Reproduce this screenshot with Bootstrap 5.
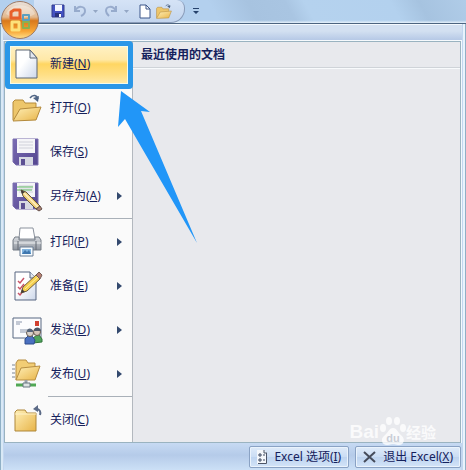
<!DOCTYPE html>
<html lang="zh-CN">
<head>
<meta charset="utf-8">
<meta name="viewport" content="width=device-width, initial-scale=1">
<title>Excel</title>
<link href="https://cdn.jsdelivr.net/npm/bootstrap@5.3.0/dist/css/bootstrap.min.css" rel="stylesheet">
<style>
body{font-family:"Noto Sans","Noto Sans CJK SC",sans-serif;font-size:12px;line-height:18px;color:#15215c;background:#b9d1ee}
button{font:inherit;color:inherit;border:0;background:none;padding:0}
svg{display:block;flex:none}
.quickbar{height:24px;padding-left:34px;border-bottom:1px solid #4c6480;background:linear-gradient(#fff0 88%,#e6f1fb),linear-gradient(62deg,#b3d0ee 0 46%,#a7c3e0 54%,#a9c5e2 62%,#b5d2ee 66%,#b3d1ee 84%,#a6c3e0 90%,#b0cce8)}
.tools{height:23px;width:151px;padding-left:17px;border:1px solid #8a9bb8;border-left:0;border-top:0;border-radius:0 0 14px 0;border-top-right-radius:8px;background:linear-gradient(#d5e3f6,#c3d5ee)}
.dim{opacity:.45}
.orb{position:absolute;left:1px;top:0;z-index:3}
.shell{border:1px solid #8fb0c6;border-top:0;border-bottom:0;padding:0 4px 0 3px;background:#c3d6ef;min-height:calc(100vh - 24px);box-shadow:inset 2px 0 #d9e9f6,inset -2px 0 #e8f3fc}
.band{height:17px;margin:0 -1px;border-top:1px solid #f4f9fe;border-bottom:1px solid #f6fafd;background:linear-gradient(#d3e0f1 40%,#b6c9e6)}
.pane{border:1px solid #9ab3c0;background:#e8e9ed;box-shadow:0 1px #f4f9fd,1px 0 #f4f9fd}
.menu{width:128px;background:#fafafa;border-right:1px solid #b3b8be}
.entry{height:44px;width:100%;padding:0 10px 0 7px;text-align:left;font-size:12px}
.entry .txt{margin-left:6px}
.picked{position:relative;background:linear-gradient(#fff3cc,#ffe9a8 40%,#ffd662 50%,#ffdf86 75%,#ffeeb4)}
.frame{position:absolute;left:0;top:-1px;right:-1px;bottom:-3px;border:5px solid #2a97e8;border-radius:4px;box-shadow:inset 0 0 0 1px #f5fbe8}
.rule{height:2px;margin-left:43px;border-top:1px solid #a9b0b8}
.heading{font-size:12px;line-height:18px;font-weight:700;padding:4px 8px 3px;border-bottom:1px solid #cfd3d8;box-shadow:0 1px #f8fafc}
.foot{padding:3px 0 2px;gap:6px;background:linear-gradient(#c7daf3,#b5cbe9 45%,#cce0f6)}
.cmd{height:22px;padding:0 7px;gap:7px;border:1px solid #8aa2c4;border-radius:2px;background:linear-gradient(#dfebf9,#cbddf4 48%,#bdd3ef 50%,#d3e4f8);box-shadow:inset 0 0 0 1px #eaf3fc;font-size:12px;line-height:18px;white-space:nowrap}
.pointer{position:absolute;left:118px;top:90px;z-index:4;pointer-events:none}
.stamp{position:absolute;right:30px;bottom:20px;z-index:4;color:#fff;opacity:.8;pointer-events:none;height:36px}
.stamp b{font:700 19px/20px "Liberation Sans",sans-serif}
.stamp .zh{font:700 15px/20px "Noto Sans CJK SC",sans-serif}
</style>
<script src="https://cdn.jsdelivr.net/npm/bootstrap@5.3.0/dist/js/bootstrap.bundle.min.js"></script>
</head>
<body class="position-relative overflow-hidden">
<svg width="0" height="0" class="position-absolute" aria-hidden="true">
<defs>
<linearGradient id="gold" x1="0" y1="0" x2="1" y2="1"><stop offset="0" stop-color="#fff0b8"/><stop offset="1" stop-color="#e8b448"/></linearGradient>
<linearGradient id="paper" x1="0" y1="0" x2="1" y2="1"><stop offset=".4" stop-color="#fff"/><stop offset="1" stop-color="#ccd7ea"/></linearGradient>
<linearGradient id="violet" x1="0" y1="0" x2="1" y2="1"><stop offset="0" stop-color="#7a6cb4"/><stop offset="1" stop-color="#54468f"/></linearGradient>
<linearGradient id="steel" x1="0" y1="0" x2="0" y2="1"><stop offset="0" stop-color="#d8dbe0"/><stop offset="1" stop-color="#8f959e"/></linearGradient>
<linearGradient id="ball" x1="0" y1="0" x2="0" y2="1"><stop offset="0" stop-color="#e9e2dc"/><stop offset=".42" stop-color="#e3b98e"/><stop offset=".52" stop-color="#d9781c"/><stop offset=".8" stop-color="#f7a535"/><stop offset="1" stop-color="#ffe08a"/></linearGradient>
<symbol id="page" viewBox="0 0 32 32"><path d="M4 2h14l7 8v20H4z" fill="url(#paper)" stroke="#5d6675"/><path d="M18 2v8h7z" fill="#e3e8f0" stroke="#5d6675" stroke-linejoin="round"/></symbol>
<symbol id="open" viewBox="0 0 32 32"><path d="M1 28V10l2-2h8l2 3h11v6" fill="#edc66b" stroke="#b48a3c"/><path d="M1 29l7-12 21-2-5 13z" fill="url(#gold)" stroke="#b48a3c" stroke-linejoin="round"/><path d="M18 6c3-4 7-3 8 1" fill="none" stroke="#4f6484" stroke-width="1.500"/><path d="M21 6l6-2-1 6z" fill="#4f6484"/></symbol>
<symbol id="disk" viewBox="0 0 32 32"><path d="M1 3h25v26H4l-3-3z" fill="url(#violet)" stroke="#7b6fae"/><path d="M5 3h18v14H5z" fill="#f5f5f8"/><path d="M7 6h14M7 9h14M7 12h14" stroke="#d0d1da"/><path d="M7 21h14v8H7z" fill="#d7d9e3"/><path d="M9 23h4v6H9z" fill="#5c5093"/></symbol>
<symbol id="pencil" viewBox="0 0 32 32"><path d="M5 7h16M5 10h15" stroke="#5fb860"/><path d="M9 10l2 6 13 13 4-3-14-14z" fill="#f0cf7a" stroke="#66583e"/><path d="M12 13l14 14" stroke="#fff0c0" stroke-width="1.5"/><path d="M9 10l1 4 3-2z" fill="#403a37"/><path d="M24 29l4-3 2 3-3 2z" fill="#a98273" stroke="#66504a"/></symbol>
<symbol id="print" viewBox="0 0 32 32"><path d="M8 2h13l2 11H7z" fill="#fff" stroke="#8b929d"/><path d="M3 11h4v3h16v-3h4l2 3v10H1V14z" fill="url(#steel)" stroke="#757c86"/><path d="M2 17h27" stroke="#eef0f2"/><path d="M6 15v9M24 15v9" stroke="#646b75"/><path d="M8 21h13v9H8z" fill="#f5fbff" stroke="#6b7d93"/><path d="M10 23h9v5h-9z" fill="#82b4df"/><path d="M10 28l3-4 2 2 2-2 2 4z" fill="#3f77af"/></symbol>
<symbol id="check" viewBox="0 0 32 32"><path d="M3 2h15l6 6v22H3z" fill="url(#paper)" stroke="#596781"/><path d="M18 2v6h6" fill="#dfe5ef" stroke="#596781"/><path d="M6 11l2 2 4-5M6 17l2 2 4-5M6 23l2 2 4-5" fill="none" stroke="#c85366" stroke-width="1.5"/><path d="M9 23l2-6L24 5l4 4-13 12z" fill="#f5cf50" stroke="#725e3c"/><path d="M13 19L26 7" stroke="#fff19c"/><path d="M9 23l1-4 3 3z" fill="#413d3b"/><path d="M24 5l3-3 3 3-2 4z" fill="#b88173" stroke="#755b54"/></symbol>
<symbol id="mail" viewBox="0 0 32 32"><path d="M1 4h28v20H1z" fill="#fcfcfe" stroke="#596982"/><path d="M23 7h4v5h-4z" fill="#d24030"/><path d="M4 8h6M4 10h4M8 16h9M8 18h6" stroke="#8b96ac"/><path d="M21 29v-5l4-3h2l3 4v3z" fill="#4fa35b" stroke="#33753c"/><circle cx="25" cy="18" r="3.5" fill="#d6c5b8" stroke="#65594e"/><path d="M22 17c0-5 7-4 7 0z" fill="#4c5768"/><path d="M13 30v-5l3-3h4l3 4-1 4z" fill="#4a70c0" stroke="#2e4c8c"/><circle cx="18" cy="19" r="3.5" fill="#d8d0ca" stroke="#65594e"/><path d="M15 18c0-5 6-4 6 0z" fill="#56657b"/></symbol>
<symbol id="share" viewBox="0 0 32 32"><path d="M4 22V5l2-3h8l2 3h7v4" fill="#f2cd75" stroke="#b78e42"/><path d="M4 22l5-12 19-2-5 14z" fill="url(#gold)" stroke="#b78e42"/><path d="M0 7h3M0 11h3M0 15h3M0 19h3" stroke="#7a8492"/><path d="M14 22v6" stroke="#9aa1a9" stroke-width="3"/><path d="M4 27h20" stroke="#51a855" stroke-width="3"/><path d="M11 25h7v4h-7z" fill="#dde3e4" stroke="#697680"/></symbol>
<symbol id="shut" viewBox="0 0 32 32"><path d="M3 10V8l2-2h8l2 3h9v18H3z" fill="url(#gold)" stroke="#ae873b"/><path d="M3 10h21" stroke="#fff2c7"/><path d="M24 5c4 0 5 3 4 6" fill="none" stroke="#5b6a86" stroke-width="2"/><path d="M21 5l5-4v7z" fill="#5b6a86"/></symbol>
</defs>
</svg>

<header class="quickbar d-flex align-items-start">
  <div class="tools d-flex align-items-center">
    <button aria-label="保存"><svg width="14" height="14" viewBox="0 0 14 14"><path d="M1 1h12v12H1z" fill="#4352c2" stroke="#343d8c"/><path d="M4 1h7v6H4z" fill="#f3f6ff"/><path d="M4 9h6v4H4z" fill="#28327c"/><path d="M8 10h2v3H8z" fill="#fff"/></svg></button>
    <button class="dim ms-2" aria-label="撤消"><svg width="14" height="14" viewBox="0 0 14 14"><path d="M2 2v5h5M2 7c3-6 10-5 10 0 0 2-2 4-4 5" fill="none" stroke="#5870a0" stroke-width="2"/></svg></button>
    <svg class="dim mx-1" width="9" height="6"><path d="M2 2h5L4.500 5z" fill="#52688f"/></svg>
    <button class="dim" aria-label="恢复"><svg width="14" height="14" viewBox="0 0 14 14"><path d="M12 2v5H7M12 7C9 1 2 2 2 7c0 2 2 4 3 5" fill="none" stroke="#5870a0" stroke-width="2"/></svg></button>
    <svg class="dim mx-1" width="9" height="6"><path d="M2 2h5L4.500 5z" fill="#52688f"/></svg>
    <button class="ps-1" aria-label="新建"><svg width="13" height="15" viewBox="0 0 13 15"><path d="M1 1h6l4 4v9H1z" fill="#fff" stroke="#3d578a"/><path d="M7 1v4h4" fill="none" stroke="#3d578a"/></svg></button>
    <button class="ms-1" aria-label="打开"><svg width="17" height="17"><use href="#open"/></svg></button>
  </div>
  <button class="ms-1 ps-1 mt-1 pt-1" aria-label="自定义快速访问工具栏"><svg width="8" height="8"><path d="M0 0h6v1H0zM0 3h6L3 6z" fill="#26426c"/></svg></button>
</header>
<button class="orb" aria-label="Office 按钮"><svg width="39" height="40" viewBox="0 0 39 40"><circle cx="19" cy="20" r="18.500" fill="url(#ball)" stroke="#9e7b66"/><path d="M5 14C9 3 29 2 34 14c-8 5-21 6-29 0z" fill="#fff" opacity=".32"/><path d="M19 10v8h-9v-6l3-2z" fill="none" stroke="#e8602a" stroke-width="3" stroke-linejoin="round"/><path d="M22 15h6v5h-6z" fill="none" stroke="#5b9fc0" stroke-width="2" stroke-linejoin="round"/><path d="M11 22h7v8h-7z" fill="none" stroke="#fde27a" stroke-width="3" stroke-linejoin="round"/><path d="M22 22h6v6h-6z" fill="none" stroke="#8cb04f" stroke-width="2" stroke-linejoin="round"/></svg></button>

<main class="shell">
  <div class="band"></div>
  <div class="pane d-flex">
    <nav class="menu d-flex flex-column flex-shrink-0" aria-label="Office 菜单">
      <button class="entry picked d-flex align-items-center"><svg width="32" height="32"><use href="#page"/></svg><span class="txt">新建(<u>N</u>)</span><span class="frame"></span></button>
      <button class="entry d-flex align-items-center"><svg width="32" height="32"><use href="#open"/></svg><span class="txt">打开(<u>O</u>)</span></button>
      <button class="entry d-flex align-items-center"><svg width="32" height="32"><use href="#disk"/></svg><span class="txt">保存(<u>S</u>)</span></button>
      <button class="entry d-flex align-items-center"><svg width="32" height="32"><use href="#disk"/><use href="#pencil"/></svg><span class="txt">另存为(<u>A</u>)</span><svg class="ms-auto" width="5" height="8"><path d="M0 0l5 4-5 4z" fill="#33496e"/></svg></button>
      <div class="rule"></div>
      <button class="entry d-flex align-items-center"><svg width="32" height="32"><use href="#print"/></svg><span class="txt">打印(<u>P</u>)</span><svg class="ms-auto" width="5" height="8"><path d="M0 0l5 4-5 4z" fill="#33496e"/></svg></button>
      <button class="entry d-flex align-items-center"><svg width="32" height="32"><use href="#check"/></svg><span class="txt">准备(<u>E</u>)</span><svg class="ms-auto" width="5" height="8"><path d="M0 0l5 4-5 4z" fill="#33496e"/></svg></button>
      <button class="entry d-flex align-items-center"><svg width="32" height="32"><use href="#mail"/></svg><span class="txt">发送(<u>D</u>)</span><svg class="ms-auto" width="5" height="8"><path d="M0 0l5 4-5 4z" fill="#33496e"/></svg></button>
      <button class="entry d-flex align-items-center"><svg width="32" height="32"><use href="#share"/></svg><span class="txt">发布(<u>U</u>)</span><svg class="ms-auto" width="5" height="8"><path d="M0 0l5 4-5 4z" fill="#33496e"/></svg></button>
      <div class="rule"></div>
      <button class="entry d-flex align-items-center"><svg width="32" height="32"><use href="#shut"/></svg><span class="txt">关闭(<u>C</u>)</span></button>
    </nav>
    <section class="flex-grow-1"><h1 class="heading m-0">最近使用的文档</h1></section>
  </div>
  <footer class="foot d-flex justify-content-end">
    <button class="cmd d-flex align-items-center"><svg width="10" height="14" viewBox="0 0 10 14"><path d="M0 0h7l3 3v11H0z" fill="#f4f7fb"/><path d="M9.500 3v10.500H1M7 0v3h3" fill="none" stroke="#4b5466"/><path d="M2 4h2v2H2zM2 9h2v2H2z" fill="none" stroke="#3c4860"/><path d="M6 5h2M6 10h2" stroke="#3c4860"/></svg><span>Excel 选项(<u>I</u>)</span></button>
    <button class="cmd d-flex align-items-center"><svg width="13" height="12" viewBox="0 0 13 12"><path d="M1 1l11 10M12 1L1 11" stroke="#454b5a" stroke-width="2"/></svg><span>退出 Excel(<u>X</u>)</span></button>
  </footer>
</main>

<svg class="pointer" width="80" height="154" viewBox="0 0 80 154" aria-hidden="true"><path d="M3 1l29 21-9-1 56 132L7 29l-7 8z" fill="#2196f8"/></svg>
<div class="stamp d-flex align-items-center"><b>Bai</b><svg width="27" height="30" viewBox="0 0 27 30"><g fill="#fff"><ellipse cx="4" cy="11" rx="3" ry="4"/><ellipse cx="10" cy="4" rx="3" ry="4"/><ellipse cx="18" cy="4" rx="3" ry="4"/><ellipse cx="24" cy="11" rx="3" ry="4"/><path d="M14 11c4 0 5 5 9 8 4 4 1 10-4 9-4-1-6-1-10 0-6 1-8-6-4-9 4-3 5-8 9-8z"/></g><text x="14" y="25" text-anchor="middle" font-family="Liberation Sans" font-weight="700" font-size="11" fill="#c3c8d2">du</text></svg><span class="zh">经验</span></div>
</body>
</html>
